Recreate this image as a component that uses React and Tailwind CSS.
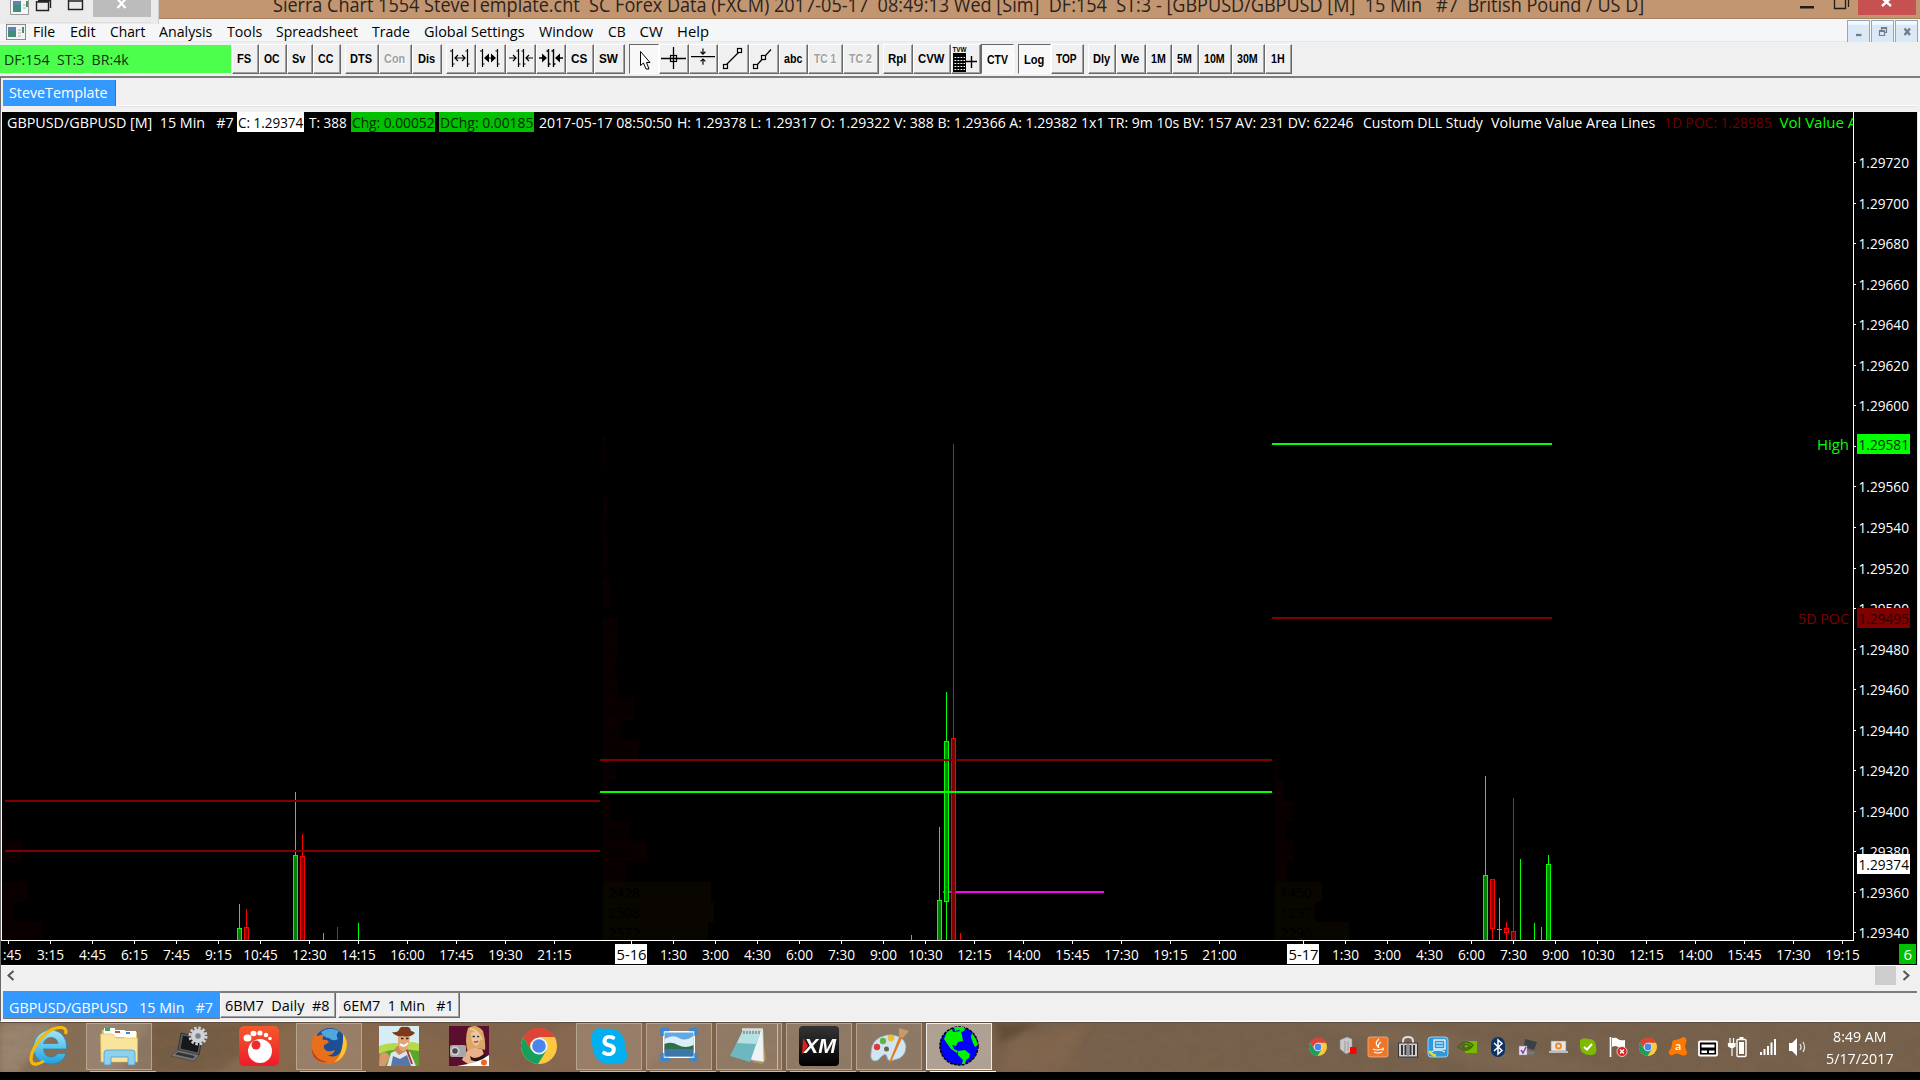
import React, { useLayoutEffect, useRef } from 'react';
import { clsx } from 'clsx';

// Squeezes or stretches a run of text to the given width
const Fit = ({ w, className, children }) => {
    const ref = useRef(null);

    useLayoutEffect(() => {
        const el = ref.current;
        el.style.transform = 'none';
        el.style.transform = `scaleX(${w / el.offsetWidth})`;
    }, [w, children]);

    return (
        <span className={clsx('inline-block shrink-0 whitespace-pre', className)} style={{ width: w }}>
            <span ref={ref} className="inline-block origin-left whitespace-pre">{children}</span>
        </span>
    );
};

const ChartFileIcon = () => (
    <svg width="20" height="16" viewBox="0 0 20 16" className="block shrink-0">
        <rect x="0.5" y="0.5" width="19" height="15" fill="#f4f4f4" stroke="#8c8c8c" />
        <rect x="2" y="3" width="8" height="10" fill="#3f8f7a" />
        <rect x="2" y="3" width="8" height="4" fill="#5b86a8" />
        <path d="M12 6h3M12 9h3M12 12h3" stroke="#b0b0b0" />
        <rect x="16" y="3" width="2" height="6" fill="#3c9a5b" />
    </svg>
);

/* ---------- Title bar ---------- */

const TITLE = 'Sierra Chart 1554 SteveTemplate.cht  SC Forex Data (FXCM) 2017-05-17  08:49:13 Wed [Sim]  DF:154  ST:3 - [GBPUSD/GBPUSD [M]  15 Min   #7  British Pound / US D]';

const TitleBar = () => (
    <div className="relative h-[19px] w-full shrink-0 bg-[#c19670] border-b border-[#a8815f]">
        <div className="h-[18px] overflow-hidden flex pl-[273px]">
            <Fit w={1371} className="-mt-[9px] text-[20px] leading-[28px] text-[#2b2320]">{TITLE}</Fit>
        </div>
        {/* Leftover caption buttons of the child window */}
        <svg width="159" height="24" className="absolute left-0 top-0 z-10">
            <rect width="159" height="24" fill="#ebebeb" />
            <path d="M6 22.5H151" stroke="#dedede" />
            <path d="M158.500 0V24" stroke="#cfcfcf" />
            <path d="M10.500 0V14.500H28.500V0" fill="#f6f6f6" stroke="#9a9a9a" />
            <rect x="13" y="1" width="8" height="11" fill="#3f8f7a" />
            <rect x="13" y="1" width="8" height="4" fill="#5b86a8" />
            <path d="M23 5h3M23 8h3" stroke="#b0b0b0" />
            <rect x="26" y="1" width="2" height="6" fill="#3c9a5b" />
            <path d="M36.500 1V10.500H48.500V1M36 2H49M38 .5H50.500V8" fill="none" stroke="#222" strokeWidth="1.400" />
            <path d="M68.500 0V9.500H82.500V0M68 1H83" fill="none" stroke="#222" strokeWidth="1.400" />
            <rect x="93" y="0" width="58" height="17" fill="#bcbcbc" />
            <path d="M117.500 -1L125.500 8M125.500 -1L117.500 8" stroke="#fff" strokeWidth="2.200" />
        </svg>
        <svg width="120" height="18" className="absolute right-0 top-0">
            <rect x="0" y="6" width="14" height="2.500" fill="#1e1e1e" />
            <path d="M34.500 0V8.500H45.500V0M48.500 0V7" fill="none" stroke="#1e1e1e" strokeWidth="1.300" />
            <rect x="58" y="0" width="58" height="15" fill="#c75050" />
            <path d="M82 -2L91 6M91 -2L82 6" stroke="#fff" strokeWidth="2.400" />
        </svg>
    </div>
);

/* ---------- Menu ---------- */

const MENU = [
    ['File', 22.500], ['Edit', 26], ['Chart', 35], ['Analysis', 53], ['Tools', 35],
    ['Spreadsheet', 82], ['Trade', 37.500], ['Global Settings', 101], ['Window', 54.500],
    ['CB', 17.500], ['CW', 23], ['Help', 31.500],
];

const MdiButton = ({ children }) => (
    <div className="w-[23px] h-[23px] border border-[#93a7bc] bg-linear-to-b from-[#f4f9fe] from-15% to-[#dbe9f7] to-20%">
        <svg width="21" height="21" viewBox="0 0 21 21" fill="none" stroke="#6f7d8c">{children}</svg>
    </div>
);

const MenuBar = () => (
    <div className="flex h-[23px] w-full shrink-0 bg-[#f5f6f7] border-b border-[#e6e7e8] pl-[6px]">
        <div className="pt-[5px] w-[27px]"><ChartFileIcon /></div>
        <div className="flex gap-[14.250px] pt-[1px] text-[15px] leading-[23px] text-black">
            {MENU.map(([label, w]) => <Fit key={label} w={w}>{label}</Fit>)}
        </div>
        <div className="ml-auto mr-[2px] mt-[1px] flex gap-[1px]">
            <MdiButton><path d="M8 14H13.500" strokeWidth="2.200" /></MdiButton>
            <MdiButton><path d="M7.500 9.500H12.500V14.500H7.500ZM9.500 9V6.500H14.500V11.500H13M7 10.500H13M9 7.500H15" strokeWidth="1.200" /></MdiButton>
            <MdiButton><path d="M8.500 7.500L14 14M14 7.500L8.500 14" strokeWidth="2.400" /></MdiButton>
        </div>
    </div>
);

/* ---------- Toolbar ---------- */

const Ink = ({ children }) => (
    <svg width="26" height="26" viewBox="0 0 26 26" fill="none" stroke="#000" strokeWidth="1.200" className="block">{children}</svg>
);

const TOOLS = {
    widen: <Ink><path d="M5.500 4V22M20.500 4V22M3 6H5.500M5.500 19H7.500M18.500 6H20.500M20.500 19H22.500M8 13H18M11 10L8 13L11 16M15 10L18 13L15 16" /></Ink>,
    widenBold: <Ink><path d="M5.500 4V22M20.500 4V22M3 6H5.500M5.500 19H7.500M18.500 6H20.500M20.500 19H22.500M8 13H18" /><path d="M12 8.500L7 13L12 17.500ZM14 8.500L19 13L14 17.500Z" fill="#000" stroke="none" /></Ink>,
    narrow: <Ink><path d="M11.500 4V22M16.500 4V22M9.500 6H11.500M11.500 19H13.500M14.500 6H16.500M16.500 19H18.500M2 13H9M6 10L9 13L6 16M26 13H19M22 10L19 13L22 16" /></Ink>,
    narrowBold: <Ink><path d="M11.500 4V22M16.500 4V22M9.500 6H11.500M11.500 19H13.500M14.500 6H16.500M16.500 19H18.500M2 13H9M26 13H19" strokeWidth="1.400" /><path d="M5 8.500L10 13L5 17.500ZM23 8.500L18 13L23 17.500Z" fill="#000" stroke="none" /></Ink>,
    pointer: <Ink><path d="M9.500 4.500V18.500L12.500 16L15 22H18L15.500 15.500H19Z" fill="#fff" strokeWidth="1" /></Ink>,
    cross: <Ink><path d="M13.500 2V24M1 13.500H26" strokeWidth="1.300" /><rect x="10.500" y="10.500" width="6" height="6" /></Ink>,
    hline: <Ink><path d="M1 11.500H26M13.500 3V9M11 6.500L13.500 9L16 6.500M13.500 14V20M11 16.500L13.500 14L16 16.500" /></Ink>,
    trend: <Ink><path d="M6.500 19.500L18.500 7.500" /><rect x="3.500" y="19.500" width="4" height="4" /><rect x="17.500" y="3.500" width="4" height="4" /></Ink>,
    ray: <Ink><path d="M7 20L21 4.500" /><rect x="3.500" y="19.500" width="4" height="4" /><rect x="11.500" y="10.500" width="4" height="4" fill="#f0f0f0" /></Ink>,
    trade: (
        <svg width="28" height="29" viewBox="0 0 28 29" className="block shrink-0" stroke="#000" fill="none">
            <rect x="2" y="9" width="13" height="19" fill="#000" stroke="none" />
            <path d="M3.500 13.500H14M3.500 16.500H14M3.500 19.500H14M3.500 22.500H14M3.500 25.500H14" stroke="#fff" strokeDasharray="1.800 1.200" />
            <path d="M15 17.500H26M20.500 12V24" strokeWidth="1.400" />
            <text x="1.500" y="8" fontSize="8" fontWeight="bold" fontFamily="Liberation Sans, sans-serif" textLength="14" lengthAdjust="spacingAndGlyphs" fill="#000" stroke="none">TVW</text>
        </svg>
    ),
};

// [button width, label or icon key, label width, state]
const GROUPS = [
    [[27, 'FS', 14.700], [28, 'OC', 16], [26, 'Sv', 13.500], [28, 'CC', 15.500]],
    [[34, 'DTS', 22], [33, 'Con', 21, 'off'], [30, 'Dis', 17]],
    [[30, 'widen'], [30, 'widenBold'], [30, 'narrow'], [30, 'narrowBold'], [28, 'CS', 16.300], [31, 'SW', 19]],
    [[30, 'pointer', 0, 'down'], [30, 'cross'], [29, 'hline'], [31, 'trend'], [30, 'ray'], [29, 'abc', 18], [35, 'TC 1', 22, 'off'], [36, 'TC 2', 22.800, 'off']],
    [[30, 'Rpl', 18.500], [38, 'CVW', 26], [30, 'trade'], [33, 'CTV', 21, 'down']],
    [[33, 'Log', 20.500, 'down'], [33, 'TOP', 21]],
    [[28, 'Dly', 17], [30, 'We', 18], [26, '1M', 14.700], [27, '5M', 14.700], [33, '10M', 20.500], [33, '30M', 20.500], [27, '1H', 14]],
];

const ToolButton = ({ width, label, textWidth, state }) => (
    <div
        className={clsx(
            'h-[30px] flex items-center justify-center overflow-hidden font-["Liberation_Sans",sans-serif] text-[13px] leading-[15px] font-bold border',
            state === 'down'
                ? 'bg-[#f8f8f8] border-t-[#696969] border-l-[#696969] border-r-white border-b-white pt-[1px]'
                : 'bg-[#f0f0f0] border-t-white border-l-white border-r-[#696969] border-b-[#696969] shadow-[inset_-1px_-1px_0_#a0a0a0] pr-[2px] pb-[2px]',
            state === 'off' ? 'text-[#a0a0a0] [text-shadow:1px_1px_0_#fff]' : 'text-black'
        )}
        style={{ width }}
    >
        {TOOLS[label] || <Fit w={textWidth}>{label}</Fit>}
    </div>
);

const Toolbar = () => (
    <div className="flex h-[36px] w-full shrink-0 bg-[#f0f0f0] border-b-2 border-[#7d7d7d]">
        <div className="mt-[3px] w-[231px] h-[28px] bg-[#4cff4c] pl-[3.500px]">
            <Fit w={124.500} className="text-[15px] leading-[28px] text-[#10300f]">{'DF:154  ST:3  BR:4k'}</Fit>
        </div>
        <div className="mt-[2px] ml-[1px] flex gap-1">
            {GROUPS.map((group, i) => (
                <div key={i} className="flex">
                    {group.map(([width, label, textWidth, state]) => (
                        <ToolButton key={label} width={width} label={label} textWidth={textWidth} state={state} />
                    ))}
                </div>
            ))}
        </div>
    </div>
);

const TabStrip = () => (
    <div className="flex items-start h-[34px] w-full shrink-0 bg-[#f0f0f0] border-l border-[#696969] pl-[2px] pt-[2px]">
        <div className="h-[26px] w-[113px] bg-[#3399ff] border-r border-[#696969] pl-[6px]">
            <Fit w={99} className="text-[15px] leading-[21px] text-white">SteveTemplate</Fit>
        </div>
        <div className="h-[26px] flex-1 border-b border-white shadow-[0_1px_0_#e3e3e3] mr-[3px]" />
    </div>
);

/* ---------- Chart ---------- */

const FONT = '"Open Sans", "Noto Sans", sans-serif';

// [left, top, right, bottom, kind, label]
const PROFILE = [
    [2, 821, 6, 841, 'r'], [2, 841, 22, 861, 'r'], [2, 882, 28, 902, 'r'], [2, 902, 13, 922, 'r'], [2, 922, 43, 940, 'r'],
    [603, 435, 606, 497, 'r'], [603, 497, 607, 517, 'r'], [603, 517, 606, 537, 'r'], [603, 537, 608, 578, 'r'], [603, 578, 609, 618, 'r'],
    [603, 618, 618, 638, 'r', '3'], [603, 638, 618, 659, 'r', '3'], [603, 659, 615, 679, 'r', '2'], [603, 679, 618, 699, 'r', '3'],
    [603, 699, 634, 720, 'r', '698'], [603, 720, 621, 740, 'r', '41'], [603, 740, 639, 760, 'r', '826'], [603, 760, 616, 780, 'r', '3'],
    [603, 780, 608, 801, 'r'], [603, 801, 611, 821, 'r'], [603, 821, 630, 841, 'r', '609'], [603, 841, 647, 861, 'r', '992'],
    [603, 862, 626, 882, 'r', '535'], [603, 882, 711, 902, 'y', '2428'], [603, 902, 714, 922, 'y', '2508'], [603, 922, 708, 940, 'y', '2372'],
    [1275, 760, 1278, 780, 'r'], [1275, 780, 1284, 801, 'r'], [1275, 801, 1293, 821, 'r', '55'], [1275, 821, 1285, 841, 'r'],
    [1275, 841, 1294, 861, 'r', '61'], [1275, 861, 1287, 882, 'r'], [1275, 882, 1322, 902, 'y', '1450'], [1275, 902, 1315, 922, 'y', '1237'],
    [1275, 922, 1349, 940, 'y', '2296'],
];

// [x, high, low, body top, body bottom, up]
const CANDLES = [
    [239, 904, 940, 928, 941, true], [246, 909, 940, 927, 941, false],
    [295, 792, 940, 855, 941, true], [302, 834, 940, 856, 941, false],
    [323, 933, 940, 0, 0, true], [337, 927, 940, 0, 0, false], [358, 923, 940, 0, 0, true],
    [911, 935, 940, 0, 0, true], [939, 827, 940, 900, 941, true], [946, 692, 940, 741, 902, true],
    [953, 444, 940, 738, 941, false], [960, 933, 940, 0, 0, false],
    [1485, 776, 940, 875, 941, true], [1492, 879, 940, 879, 929, false], [1499, 898, 940, 929, 930, true],
    [1506, 922, 940, 928, 933, false], [1513, 798, 940, 931, 941, false], [1520, 859, 940, 0, 0, true],
    [1534, 923, 940, 0, 0, true], [1541, 927, 940, 0, 0, true], [1548, 855, 940, 864, 941, true],
];

// [x1, x2, y, colour]
const LEVELS = [
    [5, 600, 800, '#800000'], [5, 600, 850, '#800000'],
    [600, 1272, 759, '#800000'], [600, 1272, 791, '#00ff00'],
    [1272, 1552, 443, '#00ff00'], [1272, 1552, 617, '#800000'],
];

const PRICES = Array.from({ length: 20 }, (_, i) => ({
    label: (1.2934 + i * 0.0002).toFixed(5),
    y: Math.round(932.300 - i * 40.530),
}));

const TIMES = [
    [50, '3:15'], [92, '4:45'], [134, '6:15'], [176, '7:45'], [218, '9:15'], [260, '10:45'], [309, '12:30'],
    [358, '14:15'], [407, '16:00'], [456, '17:45'], [505, '19:30'], [554, '21:15'],
    [631, '5-16', true], [673, '1:30'], [715, '3:00'], [757, '4:30'], [799, '6:00'], [841, '7:30'], [883, '9:00'],
    [925, '10:30'], [974, '12:15'], [1023, '14:00'], [1072, '15:45'], [1121, '17:30'], [1170, '19:15'], [1219, '21:00'],
    [1303, '5-17', true], [1345, '1:30'], [1387, '3:00'], [1429, '4:30'], [1471, '6:00'], [1513, '7:30'], [1555, '9:00'],
    [1597, '10:30'], [1646, '12:15'], [1695, '14:00'], [1744, '15:45'], [1793, '17:30'], [1842, '19:15'],
];

const Candle = ({ data: [x, high, low, top, bottom, up] }) => {
    const line = up ? '#00ff00' : '#ff0000';
    return (
        <g>
            <rect x={x} y={high} width="1" height={low - high} fill={line} />
            {bottom - top > 1 && (
                <rect x={x - 1.5} y={top + 0.5} width="4" height={bottom - top - 1} fill={up ? '#008000' : '#800000'} stroke={line} />
            )}
            {bottom - top === 1 && <rect x={x - 2} y={top} width="5" height="1" fill={line} />}
        </g>
    );
};

const PriceTag = ({ y, text, bg, fg }) => (
    <g>
        <rect x="1857" y={y} width="53" height="20" fill={bg} />
        <text x="1858.500" y={y + 15.500} fontSize="15" textLength="50.500" lengthAdjust="spacingAndGlyphs" fill={fg}>{text}</text>
    </g>
);

const Header = () => (
    <div className="absolute left-0 top-0 flex w-[1853px] h-[20px] overflow-hidden pl-[7px] text-[15px] leading-[21px] text-white">
        <Fit w={226.500}>{'GBPUSD/GBPUSD [M]  15 Min   #7'}</Fit>
        <div className="ml-[3.500px] w-[67px] shrink-0 bg-white pl-[1px] text-black"><Fit w={65.500}>C: 1.29374</Fit></div>
        <Fit w={38} className="ml-[5px]">T: 388</Fit>
        <div className="ml-[4px] w-[84px] shrink-0 bg-[#00c000] pl-[1px] text-[#002800]"><Fit w={82.500}>Chg: 0.00052</Fit></div>
        <div className="ml-[4px] w-[95px] shrink-0 bg-[#00c000] pl-[1px] text-[#002800]"><Fit w={93.500}>DChg: 0.00185</Fit></div>
        <Fit w={133.500} className="ml-[4.500px]">2017-05-17 08:50:50</Fit>
        <Fit w={676.500} className="ml-[5px]">H: 1.29378 L: 1.29317 O: 1.29322 V: 388 B: 1.29366 A: 1.29382 1x1 TR: 9m 10s BV: 157 AV: 231 DV: 62246</Fit>
        <Fit w={120} className="ml-[9px]">Custom DLL Study</Fit>
        <Fit w={164} className="ml-[8px]">Volume Value Area Lines</Fit>
        <Fit w={108} className="ml-[9px] text-[#700000]">1D POC: 1.28985</Fit>
        <Fit w={78} className="ml-[8px] text-[#00ff00]">Vol Value A</Fit>
    </div>
);

const Chart = () => (
    <div className="relative h-[854px] w-full shrink-0 bg-black">
        <svg width="1920" height="854" viewBox="0 112 1920 854" fontFamily={FONT} className="block">
            <g>
                {PROFILE.map(([l, t, r, b, kind, label]) => (
                    <svg key={`${l}-${t}`} x={l} y={t} width={r - l} height={b - t}>
                        <rect width="120" height="30" fill={kind === 'r' ? '#0b0000' : '#090600'} />
                        {label && <text x="5" y="16" fontSize="14" fill="#000">{label}</text>}
                    </svg>
                ))}
            </g>

            <rect x="943" y="891" width="161" height="2" fill="#ff00ff" />
            {CANDLES.map((c) => <Candle key={c[0]} data={c} />)}
            {LEVELS.map(([x1, x2, y, fill]) => (
                <rect key={`${x1}-${y}`} x={x1} y={y} width={x2 - x1} height="2" fill={fill} />
            ))}

            {/* Axes */}
            <rect x="1" y="940" width="1853" height="1" fill="#fff" />
            <rect x="1853" y="112" width="1" height="829" fill="#fff" />
            {PRICES.map(({ label, y }) => (
                <g key={label}>
                    <rect x="1854" y={y} width="2" height="1" fill="#fff" />
                    {label !== '1.29580' && (
                        <text x="1858.500" y={y + 5.7} fontSize="15" textLength="50.500" lengthAdjust="spacingAndGlyphs" fill="#fff">{label}</text>
                    )}
                </g>
            ))}
            <PriceTag y={434} text="1.29581" bg="#00ff00" fg="#003000" />
            <PriceTag y={608} text="1.29495" bg="#800000" fg="#200000" />
            <PriceTag y={854} text="1.29374" bg="#fff" fg="#000" />
            <text x="1817" y="450" fontSize="15" textLength="32" lengthAdjust="spacingAndGlyphs" fill="#00ff00">High</text>
            <text x="1798" y="624" fontSize="15" textLength="51" lengthAdjust="spacingAndGlyphs" fill="#800000">5D POC</text>

            <rect x="8" y="941" width="1" height="3" fill="#fff" />
            <text x="3" y="960" fontSize="15" textLength="18.500" lengthAdjust="spacingAndGlyphs" fill="#fff">:45</text>
            {TIMES.map(([x, label, day]) => {
                const w = day ? 30 : label.length === 5 ? 34.5 : 27;
                return (
                    <g key={x}>
                        <rect x={x} y="941" width="1" height="3" fill="#fff" />
                        {day && <rect x={x - 16} y="944" width="32" height="20" fill="#fff" />}
                        <text x={x + 0.5 - w / 2} y="960" fontSize="15" textLength={w} lengthAdjust="spacingAndGlyphs" fill={day ? '#000' : '#fff'}>{label}</text>
                    </g>
                );
            })}
            <rect x="1899" y="944" width="17" height="20" fill="#00c000" />
            <text x="1903.500" y="960" fontSize="15" fill="#fff">6</text>

            {/* Window frame */}
            <rect x="0" y="112" width="1" height="854" fill="#696969" />
            <rect x="1" y="112" width="1" height="829" fill="#fff" />
            <rect x="1" y="965" width="1917" height="1" fill="#fff" />
            <rect x="1917" y="112" width="1" height="854" fill="#e3e3e3" />
            <rect x="1918" y="112" width="2" height="854" fill="#fff" />
        </svg>
        <Header />
    </div>
);

/* ---------- Scrollbar and chart tabs ---------- */

const ScrollBar = () => (
    <div className="flex h-[25px] w-full shrink-0 bg-[#f0f0f0] border-l border-[#696969]">
        <svg width="20" height="20" className="block"><path d="M12.500 5L7.500 9.500L12.500 14" fill="none" stroke="#555" strokeWidth="2" /></svg>
        <div className="ml-auto h-[19px] w-[21px] bg-[#cdcdcd]" />
        <svg width="24" height="20" className="block"><path d="M7.500 5L12.500 9.500L7.500 14" fill="none" stroke="#555" strokeWidth="2" /></svg>
    </div>
);

const ChartTab = ({ w, children }) => (
    <div className="h-[25px] border border-t-0 border-l-white border-r-[#696969] border-b-[#696969] shadow-[inset_-1px_-1px_0_#a0a0a0] pl-[3.500px] pr-[5.500px]">
        <Fit w={w} className="text-[15px] leading-[24px] text-black">{children}</Fit>
    </div>
);

const ChartTabs = () => (
    <div className="flex items-start h-[31px] w-full shrink-0 bg-[#f0f0f0] border-l border-[#696969] border-b border-b-white pl-[2px]">
        <div className="h-[28px] w-[217px] bg-[#3399ff] border-b border-[#7a7a7a] pl-[6px]">
            <Fit w={204} className="text-[15px] leading-[33px] text-white">{'GBPUSD/GBPUSD   15 Min   #7'}</Fit>
        </div>
        <div className="flex flex-1 gap-[2px] border-t-2 border-[#7d7d7d] mr-[3px]">
            <ChartTab w={105}>{'6BM7  Daily  #8'}</ChartTab>
            <ChartTab w={111}>{'6EM7  1 Min   #1'}</ChartTab>
        </div>
    </div>
);

/* ---------- Taskbar ---------- */

const Chrome = ({ size }) => (
    <svg width={size} height={size} viewBox="0 0 40 40">
        <circle cx="20" cy="20" r="18" fill="#fbc93d" />
        <path d="M20 20L4.400 11A18 18 0 0 1 35.600 11L20 11Z" fill="#db4437" />
        <path d="M4.400 11A18 18 0 0 0 19 38L27.500 24.500L12.300 24Z" fill="#17a05d" />
        <path d="M4.400 11A18 18 0 0 1 35.600 11H20A9 9 0 0 0 12 24Z" fill="#db4437" />
        <circle cx="20" cy="20" r="8.600" fill="#f1f1f1" />
        <circle cx="20" cy="20" r="6.800" fill="#4a84ee" />
    </svg>
);

const Box = ({ children }) => <svg width="40" height="40" viewBox="0 0 40 40">{children}</svg>;

const InternetExplorer = () => (
    <Box>
        <defs>
            <linearGradient id="ie" x1="0" y1="0" x2="0" y2="1"><stop offset="0" stopColor="#9fe6fb" /><stop offset="1" stopColor="#1fa2e0" /></linearGradient>
        </defs>
        <path d="M37.500 23H14.500C15 28 17.500 31 22 31C25.500 31 27.500 29.500 28.500 27.500H37C35 34 29.500 38 22 38C12 38 4.500 31.500 4.500 21.500C4.500 11.500 12.500 4 21.500 4C32 4 38.500 12 37.500 23ZM29 17.500C28.500 14 26 11.500 22 11.500C18 11.500 15.500 14 14.500 17.500Z" fill="url(#ie)" stroke="#1a82bd" strokeWidth="0.600" />
        <path d="M36.500 8C39 1 31 0 23 3.500C10 10 0 28 2.500 35.500C4 40 10 38 15 35" fill="none" stroke="#f3b90c" strokeWidth="3.200" />
    </Box>
);

const Explorer = () => (
    <Box>
        <path d="M3 4L14 2L18 6H38V35H2Z" fill="#e7c867" />
        <path d="M5 2H16V9H5ZM14 4H26V11H14ZM25 5H37V12H25Z" fill="#fff" />
        <path d="M6 2h5v3h-5z" fill="#3aa655" /><path d="M16 5h5v2h-5z" fill="#d84b3c" /><path d="M27 6h4v2h-4z" fill="#4b7fd8" />
        <path d="M1.500 8H14L17 12H38.500V36H2Z" fill="#f8e49a" stroke="#d9ba5b" strokeWidth="0.600" />
        <path d="M5 39V27Q5 24 8 24H33Q36 24 36 27V39H29V31H12V39Z" fill="#8fd0ee" stroke="#4f9cc6" strokeWidth="0.800" />
    </Box>
);

const Laptop = () => (
    <Box>
        <path d="M12 7L33 12L30 29L9 24Z" fill="#5a5a5a" stroke="#333" />
        <path d="M14 9.500L31 13.500L28.500 26.500L11.500 22.500Z" fill="#16181c" />
        <path d="M9 24L30 29L25 35L2 30Z" fill="#777" stroke="#444" strokeWidth="0.700" />
        <path d="M9 26L26 30L24 32.500L6 28.500Z" fill="#333" />
        <circle cx="29" cy="10" r="5" fill="#a7acb2" stroke="#cfd3d8" strokeWidth="4" />
        <circle cx="29" cy="10" r="8" fill="none" stroke="#cfd3d8" strokeWidth="3" strokeDasharray="2.500 1.700" />
        <circle cx="29" cy="10" r="2.500" fill="#7c828a" />
    </Box>
);

const Gom = () => (
    <Box>
        <defs>
            <linearGradient id="gom" x1="0" y1="0" x2="0" y2="1"><stop offset="0" stopColor="#f4592b" /><stop offset="1" stopColor="#ee1b2a" /></linearGradient>
        </defs>
        <rect width="40" height="40" rx="5" fill="url(#gom)" />
        <circle cx="21" cy="25" r="12" fill="#fff" />
        <circle cx="17" cy="19" r="4.500" fill="#ee2b28" />
        <ellipse cx="8.500" cy="12" rx="4" ry="3.600" fill="#fff" />
        <ellipse cx="14.500" cy="7.500" rx="3" ry="2.800" fill="#fff" />
        <ellipse cx="21" cy="7" rx="2.600" ry="2.600" fill="#fff" />
        <ellipse cx="27" cy="9" rx="2.300" ry="2.300" fill="#fff" />
        <ellipse cx="31" cy="12.500" rx="1.800" ry="1.800" fill="#fff" />
    </Box>
);

const Firefox = () => (
    <Box>
        <circle cx="21" cy="18" r="16" fill="#1d4f96" />
        <path d="M12 6Q20 0 30 5Q26 9 29 13Q24 16 20 12Q15 12 12 6Z" fill="#4ea8de" />
        <path d="M34 8Q39 14 37.500 22Q35 37 20 38Q4 37 2.500 22Q2 14 6 7Q7 10 9 10Q12 8 15 9Q13 12 14 14Q18 13 20 16Q18 18 15 19Q14 23 18 25Q22 26 26 24Q24 30 18 29Q26 33 31 27Q35 21 34 8Z" fill="#e8701b" />
        <path d="M34 8Q39 14 37.500 22Q35 33 25 36.500Q35 28 34 8Z" fill="#f9c633" />
        <path d="M2.500 22Q6 34 18 36Q10 37 5 31Q3 27 2.500 22Z" fill="#c5361c" />
    </Box>
);

const Farmer = () => (
    <Box>
        <rect width="40" height="40" fill="#d5edf5" />
        <path d="M0 20Q12 15 24 18Q34 14 40 18V40H0Z" fill="#b4d94a" />
        <path d="M0 28Q14 21 40 25V40H0Z" fill="#5fa42a" />
        <path d="M8 40L12 27L20 23L31 26L37 40Z" fill="#dce6f0" />
        <path d="M12 40L14 30L21 33L28 29L32 40Z" fill="#5578a8" />
        <path d="M15 24L20 29L29 24L27 20H18Z" fill="#c58a5c" />
        <path d="M19 8H31L30 19Q27 26 23 25Q19 23 19 17Z" fill="#e2a676" />
        <path d="M21 18Q25 22 29 17" stroke="#fff" strokeWidth="2" fill="none" />
        <path d="M22 12.500h2.500M27 12.500h2.500" stroke="#3a2417" strokeWidth="1.300" />
        <path d="M13 6Q18 7 20 4Q21 0 26 1Q31 0 32 5Q34 5 36 7Q31 12 24 10Q16 11 13 6Z" fill="#7d3a1b" />
        <path d="M1 29Q3 25 8 27L11 31L6 40H0Z" fill="#d99a6b" />
        <path d="M28 24L33 38" stroke="#b03a2c" strokeWidth="2" />
    </Box>
);

const Girl = () => (
    <Box>
        <rect width="40" height="40" fill="#5b0f2e" />
        <path d="M19 2Q27 -3 34 5Q37 16 36 24L30 22Q22 24 19 27Q15 14 19 2Z" fill="#d9a866" />
        <path d="M22 7Q28 3 31 9Q32 17 27 20Q22 18 22 7Z" fill="#f1c3a0" />
        <path d="M16 27Q23 20 33 23L38 36L22 40L13 34Z" fill="#e9b08a" />
        <path d="M21 30Q27 35 36 27L37 31Q30 38 22 34Z" fill="#2a1418" />
        <path d="M23.500 10.500h2.500M28 10.500h2.500" stroke="#263a5c" strokeWidth="1.500" />
        <path d="M25 15.500Q27 17 29 15" stroke="#c0283a" strokeWidth="1.400" fill="none" />
        <path d="M21 3Q28 2 33 14" stroke="#f0cf94" strokeWidth="1.500" fill="none" />
        <rect x="1" y="19" width="16" height="12" rx="2" fill="#a7a7a9" />
        <circle cx="6" cy="25" r="4.500" fill="#cfcfd2" /><circle cx="6" cy="25" r="2.800" fill="#4c4c50" />
        <path d="M8 40Q30 37 40 29V40Z" fill="#fff" />
        <circle cx="35" cy="36.500" r="3" fill="#f1661f" />
    </Box>
);

const Skype = () => (
    <Box>
        <path d="M3 8Q6 0 15 3Q32 0 36 17Q35 23 38 27Q39 39 27 38Q5 40 4 22Q1 15 3 8Z" fill="#00aff0" />
        <text x="20" y="30" fontSize="28" fontWeight="900" textAnchor="middle" fontFamily="Lato, sans-serif" fill="#fff">S</text>
    </Box>
);

const Picture = () => (
    <Box>
        <rect x="4" y="5" width="32" height="27" fill="#fff" />
        <rect x="5.500" y="6.500" width="29" height="24" fill="#63a8e2" />
        <path d="M5.500 13Q14 8 20 12T34.500 10V22H5.500Z" fill="#dceefa" />
        <path d="M5.500 18Q12 15 19 19T34.500 19V24H5.500Z" fill="#2f6e4a" />
        <rect x="5.500" y="23" width="29" height="7.500" fill="#3d77a8" />
        <path d="M3 10V3.500H10M30 3.500H37V10M37 27V33.500H30M10 33.500H3V27" fill="none" stroke="#3c86c9" strokeWidth="3.500" />
    </Box>
);

const Notepad = () => (
    <Box>
        <path d="M33 6L37 33L33 38L24 36Z" fill="#b9954f" />
        <path d="M16 4H34L35 36L22 34Z" fill="#eef2f2" stroke="#9aa" strokeWidth="0.600" />
        <path d="M14 4H32L21 36L1 30Z" fill="#6db7c1" />
        <path d="M14 4H32L27 18L8 17Z" fill="#b7e0e3" />
        <path d="M15 4V8M18 4V8M21 4V8M24 4V8M27 4V8M30 4V8" stroke="#666" />
        <path d="M13 3.500H34" stroke="#ddd" strokeWidth="2.500" />
    </Box>
);

const XM = () => (
    <Box>
        <defs>
            <linearGradient id="xm" x1="0" y1="0" x2="0" y2="1"><stop offset="0" stopColor="#343434" /><stop offset="1" stopColor="#000" /></linearGradient>
        </defs>
        <rect width="40" height="40" rx="4" fill="url(#xm)" />
        <path d="M4 12L9 20L3 28Z" fill="#e0201b" />
        <text x="5" y="27" fontSize="20" fontWeight="900" fontStyle="italic" fontFamily="Liberation Sans, sans-serif" textLength="32" lengthAdjust="spacingAndGlyphs" fill="#fff">XM</text>
    </Box>
);

const Paint = () => (
    <Box>
        <path d="M2 27Q2 12 18 9Q35 8 37 20Q37 32 25 34Q18 36 18 31Q17 26 12 31Q8 37 3 34Q1 31 2 27Z" fill="#cfe5f2" stroke="#86aac2" strokeWidth="0.800" />
        <circle cx="8" cy="21" r="3.200" fill="#de3b32" />
        <circle cx="14" cy="15" r="3.200" fill="#5fb548" />
        <circle cx="22" cy="12" r="3.400" fill="#f2bd2e" />
        <circle cx="17.500" cy="23" r="2.500" fill="#77604b" />
        <path d="M34 10L22 36L20 39L21 34L31 9Z" fill="#e27a1e" />
        <path d="M30 2L40 5L34 12L30 10Z" fill="#c79a66" />
    </Box>
);

const Globe = () => (
    <Box>
        <circle cx="20" cy="20" r="19" fill="#0000fe" stroke="#000" strokeWidth="1.500" strokeDasharray="3 1" />
        <path d="M8 6L13 3L14 6L22 5L23 9L24 15L19 16L17 20L13 19L15 23L19 25L18 27L12 23L7 16L5 13Z" fill="#00f400" />
        <path d="M15 1L25 1L26 4L23 6L20 4L16 5Z" fill="#00f400" />
        <path d="M19 25L26 24L31 28L30 32L27 34L26 38H23L24 34L19 29Z" fill="#00f400" />
        <path d="M33 7L37 13L39 19L36 21L34 17L32 11Z" fill="#00f400" />
    </Box>
);

// [component, window state]
const APPS = [
    [InternetExplorer, ''], [Explorer, 'open'], [Laptop, ''], [Gom, ''], [Firefox, 'open'], [Farmer, ''], [Girl, ''],
    [() => <Chrome size={40} />, ''], [Skype, 'open'], [Picture, 'open'], [Notepad, 'multi'], [XM, 'open'], [Paint, 'open'], [Globe, 'active'],
];

const TaskButton = ({ icon: Icon, state }) => (
    <div
        className={clsx(
            'relative flex w-[66px] h-[47px] items-center justify-center border pb-[2px]',
            state === '' && 'border-transparent',
            (state === 'open' || state === 'multi') && 'border-[#b5a593] bg-[#ffffff26]',
            state === 'active' && 'border-[#f1ece6] bg-[#ffffff66]'
        )}
    >
        <Icon />
        {state === 'multi' && <div className="absolute right-[3px] top-0 h-[45px] w-px bg-[#cabcab]" />}
        {state !== '' && <div className={clsx('absolute left-[3px] -bottom-[3px] w-[66px] h-px', state === 'active' ? 'bg-white' : 'bg-[#cabcab]')} />}
    </div>
);

const Tray = ({ children }) => <svg width="20" height="20" viewBox="0 0 20 20" className="overflow-visible">{children}</svg>;

const TRAY = [
    <Chrome size={20} />,
    <Tray><path d="M2 3L9 0L14 2V14L8 17L2 12Z" fill="#c9c9c9" stroke="#8b8b8b" strokeWidth="0.600" /><path d="M7 4V15M10 4V14" stroke="#999" /><rect x="12" y="10" width="6.500" height="7" fill="#f00" /></Tray>,
    <Tray><rect width="20" height="20" rx="2" fill="#ee7624" stroke="#f6c29c" strokeWidth="0.700" /><path d="M11 2Q6 6 10 10M13 5Q9 8 11 11M5 12Q9 14 14 12M6 15Q10 17 14 15M14 11Q17 11 14 13.500" fill="none" stroke="#fff" strokeWidth="1.200" /></Tray>,
    <Tray><path d="M5 7V4Q5 0 10 0T15 4V7" fill="none" stroke="#ddd" strokeWidth="2" /><rect x="0.500" y="6" width="19" height="14" fill="#d0d0d0" stroke="#333" /><path d="M4 8V18M7.500 8V18M12.500 8V18M16 8V18" stroke="#333" strokeWidth="2" /><path d="M10 6V19" stroke="#555" /></Tray>,
    <Tray><rect width="20" height="20" rx="3" fill="#2b9be0" stroke="#b9def5" strokeWidth="0.800" /><rect x="6" y="3" width="11" height="9" fill="none" stroke="#fff" strokeWidth="1.300" /><path d="M8 6H15M8 9H15M3 15Q10 11 17 15" stroke="#fff" fill="none" /><path d="M1 14Q4 18 8 19" stroke="#f1d32c" strokeWidth="2.500" fill="none" /></Tray>,
    <Tray><rect x="7" y="4" width="12" height="12" fill="#76b900" /><path d="M0 10Q7 1 15 8Q9 17 0 10ZM4 10Q8 5 12 9Q8 13 4 10Z" fill="none" stroke="#3c6a08" strokeWidth="1.500" /></Tray>,
    <Tray><rect x="3" y="0" width="14" height="20" rx="7" fill="#0d3265" /><path d="M6 6L14 13.500L10 17V3L14 6.500L6 14" fill="none" stroke="#fff" strokeWidth="1.500" /></Tray>,
    <Tray><path d="M7 2L19 5L16 13L6 10Z" fill="#3c4148" /><path d="M3 13L17 15L15 18L2 17Z" fill="#777" /><rect x="1" y="9" width="8" height="9" fill="#e9e2f0" stroke="#888" strokeWidth="0.500" /><path d="M3 13L5 16L8 10" stroke="#8441a5" strokeWidth="1.500" fill="none" /></Tray>,
    <Tray><rect x="3" y="4" width="15" height="10" fill="#e6e6e6" stroke="#888" strokeWidth="0.600" /><path d="M1 14H20V16H1Z" fill="#bbb" /><circle cx="10.500" cy="9" r="2.500" fill="none" stroke="#f08a24" strokeWidth="1.800" /></Tray>,
    <Tray><path d="M2 3Q6 0 10 2Q17 1 18 9Q20 19 12 18Q3 18 2 10Z" fill="#7fba00" /><path d="M6 10L9 12.500L14 7" stroke="#fff" strokeWidth="2" fill="none" /></Tray>,
    <Tray><path d="M2.500 0V20" stroke="#fff" strokeWidth="1.600" /><path d="M4 1Q8 0 10 2T17 3V11Q13 12 10 10T4 10Z" fill="#fff" /><circle cx="14" cy="14.500" r="5" fill="#e02020" stroke="#fff" strokeWidth="0.700" /><path d="M12 12.500L16 16.500M16 12.500L12 16.500" stroke="#fff" strokeWidth="1.400" /></Tray>,
    <Chrome size={20} />,
    <Tray><path d="M7 3Q11 3 15 0Q20 1 18 6Q16 9 19 15Q19 20 13 18Q9 15 5 18Q0 19 1 14Q4 11 4 7Q4 3 7 3Z" fill="#ff7800" /><text x="10" y="13" fontSize="12" fontWeight="bold" textAnchor="middle" fontFamily="Lato, sans-serif" fill="#fff">a</text></Tray>,
    <Tray><rect x="1" y="4.500" width="18" height="14" rx="1" fill="#000" stroke="#fff" strokeWidth="1.800" /><path d="M3.500 7.500H16.500V10.500H3.500ZM3.500 13.500H9V16H3.500ZM11 13.500H16.500V16H11Z" fill="#fff" /></Tray>,
    <Tray><rect x="9" y="2.500" width="9" height="17" rx="1" fill="#6e5b49" stroke="#fff" strokeWidth="1.400" /><rect x="11" y="5" width="5" height="12" fill="#fff" /><rect x="11.500" y="0" width="4" height="2" fill="#fff" /><path d="M2 1V6M5.500 1V6M0.500 6.500H7V9Q4 12 0.500 9ZM4 11V19" fill="#fff" stroke="#fff" strokeWidth="1.200" /></Tray>,
    <Tray><path d="M3 18V15M6.500 18V12M10 18V9M13.500 18V5.500M17 18V2" stroke="#fff" strokeWidth="2" /></Tray>,
    <Tray><path d="M1 6H4L9 1V19L4 14H1Z" fill="#fff" /><path d="M12 7Q14 10 12 13M15 5Q18 10 15 15" fill="none" stroke="#ddd" strokeWidth="1.300" /></Tray>,
];

// Sandy streaks of the desktop wallpaper behind the glass
const Sand = () => (
    <svg width="1920" height="49" viewBox="0 0 1920 49" className="absolute left-0 top-0">
        <defs>
            <filter id="soft" x="-5%" y="-50%" width="110%" height="200%"><feGaussianBlur stdDeviation="3" /></filter>
            <filter id="grain" x="0" y="0" width="100%" height="100%">
                <feTurbulence type="fractalNoise" baseFrequency="0.05 0.09" numOctaves="3" seed="4" />
                <feColorMatrix values="0 0 0 0 0.25  0 0 0 0 0.15  0 0 0 0 0.08  1.4 0 0 0 -0.55" />
            </filter>
        </defs>
        <g filter="url(#soft)">
            <path d="M0 0H60L18 49H0Z" fill="#a5937e" opacity="0.6" />
            <path d="M150 0H290L215 49H120Z" fill="#5c412b" opacity="0.35" />
            <path d="M270 0H400L520 49H230Z" fill="#8c6a4a" opacity="0.5" />
            <path d="M560 0L530 49H640L700 0Z" fill="#93745a" opacity="0.4" />
            <path d="M995 0H1040L1000 20Z" fill="#56402d" opacity="0.6" />
            <path d="M1010 20L1090 0L1060 49H1000Z" fill="#8a6a50" opacity="0.5" />
            <path d="M1300 0L1500 49H1620L1400 0Z" fill="#84705c" opacity="0.35" />
        </g>
        <rect width="1920" height="49" filter="url(#grain)" opacity="0.45" />
    </svg>
);

const Taskbar = () => (
    <div className="relative flex h-[50px] w-full shrink-0 border-t border-[#5d4a3a] bg-linear-to-r from-[#86705a] from-0% via-[#81644a] via-25% to-[#75604c] to-60% pl-[16px]">
        <Sand />
        <div className="relative flex gap-1">
            {APPS.map(([icon, state], i) => <TaskButton key={i} icon={icon} state={state} />)}
        </div>
        <div className="relative ml-auto flex gap-[10px] items-center h-[48px]">
            {TRAY.map((icon, i) => <div key={i} className="flex w-[20px] h-[20px] items-center justify-center">{icon}</div>)}
        </div>
        <div className="relative flex w-[68px] ml-[18px] mr-[26px] flex-col items-center pt-[2px] text-[15px] leading-[22px] text-white">
            <Fit w={54}>8:49 AM</Fit>
            <Fit w={67.500}>5/17/2017</Fit>
        </div>
    </div>
);

const App = () => (
    <div className='flex flex-col w-[1920px] h-[1080px] overflow-hidden bg-black font-["Open_Sans","Noto_Sans",sans-serif]'>
        <TitleBar />
        <MenuBar />
        <Toolbar />
        <TabStrip />
        <Chart />
        <ScrollBar />
        <ChartTabs />
        <Taskbar />
    </div>
);

export default App;
